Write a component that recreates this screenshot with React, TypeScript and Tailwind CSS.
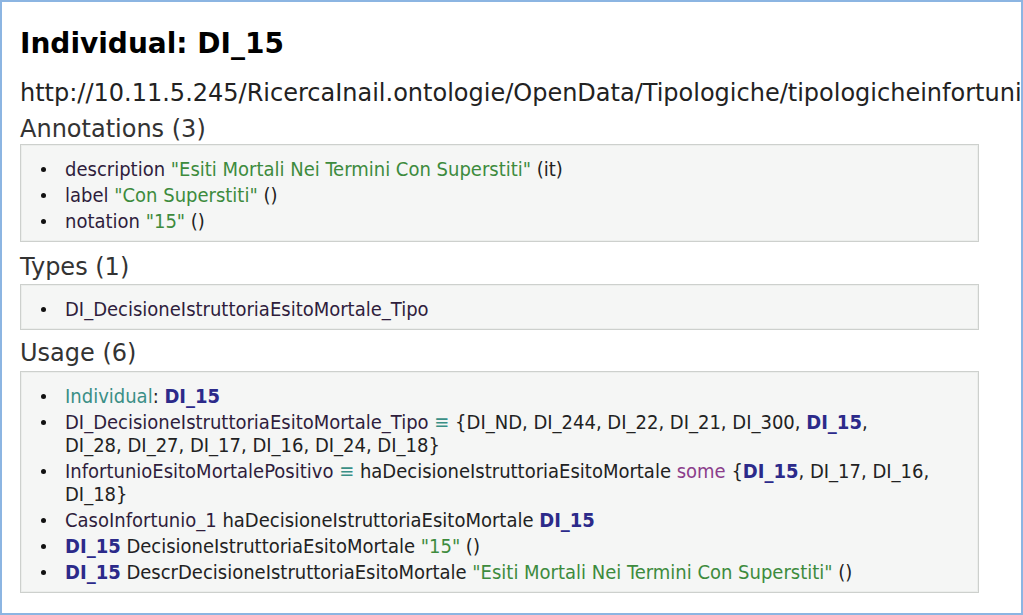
import React from "react";

const STR = "text-[#3d8b3d]";
const ENT = "text-[#2f1d3c]";
const BOLD = "font-bold text-[#2c2a8a]";
const TEAL = "text-[#3a8f86]";
const WIDE = '"DejaVu Sans", Verdana, sans-serif';

function Box({ children }: { children: React.ReactNode }) {
  return (
    <div className="w-[959px] border border-[#cdd0cd] bg-[#f5f6f5] pt-[13px] pb-[8px] pl-[19px] pr-[20px] shadow-[inset_0_0_0_1px_#eceeec]">
      <ul className="flex flex-col gap-[3px] text-[20px] leading-[23px] text-[#222]">{children}</ul>
    </div>
  );
}

function Li({ children }: { children: React.ReactNode }) {
  return (
    <li className="flex items-start">
      <span className="mt-[9px] ml-[1px] w-[5px] h-[5px] rounded-full bg-[#111] shrink-0" />
      <div className="ml-[19px] min-w-0">{children}</div>
    </li>
  );
}

function Title({ children, className = "" }: { children: React.ReactNode; className?: string }) {
  return (
    <div
      className={"text-[24px] leading-[30px] text-[#333] " + className}
      style={{ fontFamily: WIDE }}
    >
      {children}
    </div>
  );
}

export default function App() {
  return (
    <div
      className="w-[1023px] h-[615px] border-2 border-[#8cb5e2] bg-white overflow-hidden pl-[18px] pt-[25px]"
      style={{ fontFamily: '"DejaVu Sans Condensed", "DejaVu Sans", Tahoma, sans-serif' }}
    >
      <h1 className="text-[28px] font-bold text-black leading-[34px]" style={{ fontFamily: WIDE }}>
        Individual: DI_15
      </h1>
      <div
        className="whitespace-nowrap text-[24px] leading-[30px] text-[#222] mt-[17px]"
        style={{ fontFamily: WIDE }}
      >
        http://10.11.5.245/RicercaInail.ontologie/OpenData/Tipologiche/tipologicheinfortuni
      </div>
      <Title className="mt-[6px]">Annotations (3)</Title>
      <Box>
        <Li>
          <span className={ENT}>description</span> <span className={STR}>"Esiti Mortali Nei Termini Con Superstiti"</span> (it)
        </Li>
        <Li>
          <span className={ENT}>label</span> <span className={STR}>"Con Superstiti"</span> ()
        </Li>
        <Li>
          <span className={ENT}>notation</span> <span className={STR}>"15"</span> ()
        </Li>
      </Box>
      <Title className="mt-[10px] mb-[2px]">Types (1)</Title>
      <Box>
        <Li>
          <span className={ENT}>DI_DecisioneIstruttoriaEsitoMortale_Tipo</span>
        </Li>
      </Box>
      <Title className="mt-[8px] mb-[3px]">Usage (6)</Title>
      <Box>
        <Li>
          <span className={TEAL}>Individual</span>: <span className={BOLD}>DI_15</span>
        </Li>
        <Li>
          <span className={ENT}>DI_DecisioneIstruttoriaEsitoMortale_Tipo</span>{" "}
          <span className={TEAL}>≡</span> {"{"}DI_ND, DI_244, DI_22, DI_21, DI_300,{" "}
          <span className={BOLD}>DI_15</span>,<br />
          DI_28, DI_27, DI_17, DI_16, DI_24, DI_18{"}"}
        </Li>
        <Li>
          <span className={ENT}>InfortunioEsitoMortalePositivo</span> <span className={TEAL}>≡</span>{" "}
          haDecisioneIstruttoriaEsitoMortale <span className="text-[#8b3d8b]">some</span> {"{"}
          <span className={BOLD}>DI_15</span>, DI_17, DI_16,
          <br />
          DI_18{"}"}
        </Li>
        <Li>
          <span className={ENT}>CasoInfortunio_1</span> haDecisioneIstruttoriaEsitoMortale{" "}
          <span className={BOLD}>DI_15</span>
        </Li>
        <Li>
          <span className={BOLD}>DI_15</span> DecisioneIstruttoriaEsitoMortale <span className={STR}>"15"</span> ()
        </Li>
        <Li>
          <span className={BOLD}>DI_15</span> DescrDecisioneIstruttoriaEsitoMortale{" "}
          <span className={STR}>"Esiti Mortali Nei Termini Con Superstiti"</span> ()
        </Li>
      </Box>
    </div>
  );
}
